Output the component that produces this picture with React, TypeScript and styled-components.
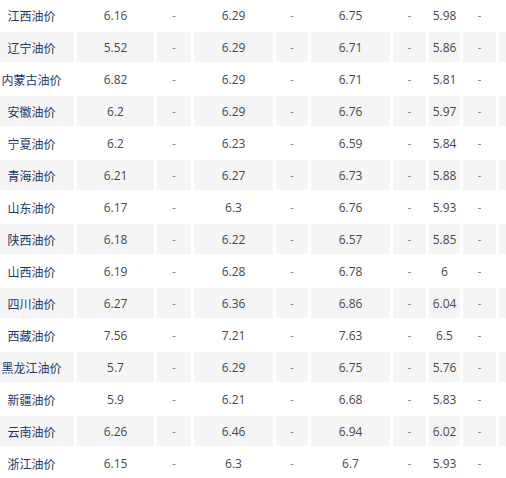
import styled, { createGlobalStyle } from 'styled-components';

const GlobalStyle = createGlobalStyle`
  html, body {
    margin: 0;
    padding: 0;
    background: #ffffff;
    overflow: hidden;
  }
`;

type Row = [string, string, string, string, string];

const ROWS: Row[] = [
  ['江西油价', '6.16', '6.29', '6.75', '5.98'],
  ['辽宁油价', '5.52', '6.29', '6.71', '5.86'],
  ['内蒙古油价', '6.82', '6.29', '6.71', '5.81'],
  ['安徽油价', '6.2', '6.29', '6.76', '5.97'],
  ['宁夏油价', '6.2', '6.23', '6.59', '5.84'],
  ['青海油价', '6.21', '6.27', '6.73', '5.88'],
  ['山东油价', '6.17', '6.3', '6.76', '5.93'],
  ['陕西油价', '6.18', '6.22', '6.57', '5.85'],
  ['山西油价', '6.19', '6.28', '6.78', '6'],
  ['四川油价', '6.27', '6.36', '6.86', '6.04'],
  ['西藏油价', '7.56', '7.21', '7.63', '6.5'],
  ['黑龙江油价', '5.7', '6.29', '6.75', '5.76'],
  ['新疆油价', '5.9', '6.21', '6.68', '5.83'],
  ['云南油价', '6.26', '6.46', '6.94', '6.02'],
  ['浙江油价', '6.15', '6.3', '6.7', '5.93'],
];

const COL_WIDTHS = [85, 77, 34, 79, 32, 79, 33, 31, 33, 40];
const SPACING = 3;
const TABLE_WIDTH =
  COL_WIDTHS.reduce((sum, w) => sum + w, 0) + SPACING * (COL_WIDTHS.length + 1);

const Viewport = styled.div`
  width: 506px;
  height: 478px;
  overflow: hidden;
`;

const PriceTable = styled.table`
  margin: -2px 0 0 -14px;
  border-collapse: separate;
  border-spacing: ${SPACING}px 2px;
  table-layout: fixed;
  font-family: 'Open Sans', 'Noto Sans CJK SC', sans-serif;
  font-size: 12px;
`;

const TableRow = styled.tr<{ $shaded: boolean }>`
  background: ${(p) => (p.$shaded ? '#f5f5f5' : '#ffffff')};
`;

const Cell = styled.td`
  height: 29px;
  padding: 1px 0 0;
  text-align: center;
  vertical-align: middle;
  white-space: nowrap;
  color: #4a4a4a;
`;

const NameCell = styled(Cell)`
  color: #1d3768;
`;

const DashCell = styled(Cell)`
  color: #8a8a8a;
`;

export default function App() {
  return (
    <>
      <GlobalStyle />
      <Viewport>
        <PriceTable style={{ width: TABLE_WIDTH, minWidth: TABLE_WIDTH }}>
          <colgroup>
            {COL_WIDTHS.map((w, i) => (
              <col key={i} style={{ width: w }} />
            ))}
          </colgroup>
          <tbody>
            {ROWS.map(([name, a, b, c, d], i) => (
              <TableRow key={name} $shaded={i % 2 === 1}>
                <NameCell>{name}</NameCell>
                <Cell>{a}</Cell>
                <DashCell>-</DashCell>
                <Cell>{b}</Cell>
                <DashCell>-</DashCell>
                <Cell>{c}</Cell>
                <DashCell>-</DashCell>
                <Cell>{d}</Cell>
                <DashCell>-</DashCell>
                <Cell />
              </TableRow>
            ))}
          </tbody>
        </PriceTable>
      </Viewport>
    </>
  );
}
